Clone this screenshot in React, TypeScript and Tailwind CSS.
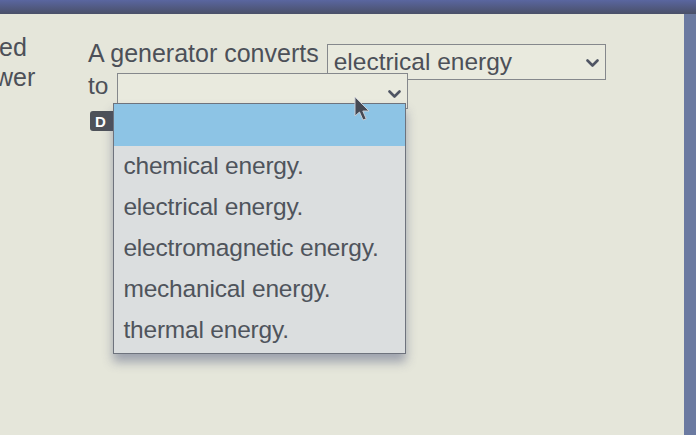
import React from 'react'

const options = [
  'chemical energy.',
  'electrical energy.',
  'electromagnetic energy.',
  'mechanical energy.',
  'thermal energy.'
]

const Chevron = () => (
  <svg width="13" height="9" viewBox="0 0 13 9" className="shrink-0">
    <path
      d="M1.5 1.5 L6.5 6.5 L11.5 1.5"
      fill="none"
      stroke="#4f5563"
      strokeWidth="2.6"
      strokeLinecap="round"
      strokeLinejoin="round"
    />
  </svg>
)

const Cursor = () => (
  <svg
    width="18"
    height="27"
    viewBox="0 0 18 27"
    className="absolute left-[236px] top-[-12px] z-20"
  >
    <path
      d="M1 1 L1 20 L5.5 16 L9 24 L12.2 22.8 L8.8 15 L15 15 Z"
      fill="#454954"
      stroke="#c9ccd3"
      strokeWidth="1"
      strokeLinejoin="round"
    />
  </svg>
)

const OptionList = () => (
  <div className="absolute left-[-5px] top-[-5px] z-10 w-[293px] border border-[#6e737d] bg-[#dbdedf] shadow-[0_8px_10px_rgba(70,80,120,0.45)]">
    <div className="h-[42px] bg-[#8dc4e5]" />
    <ul className="pb-[2px]">
      {options.map((opt) => (
        <li
          key={opt}
          className="flex h-[41px] items-center pl-[9px] text-[24.5px] leading-none tracking-[-0.2px] text-[#4f545c]"
        >
          {opt}
        </li>
      ))}
    </ul>
  </div>
)

export default function App() {
  return (
    <div className="flex h-[435px] w-[696px] flex-col overflow-hidden bg-[#e5e6da] font-['Liberation_Sans',Arial,sans-serif] text-[#4c5058]">
      <div className="h-[14px] bg-gradient-to-b from-[#5a66a0] to-[#4a5068]" />
      <div className="flex flex-1">
        <div className="flex flex-1 pt-[30px]">
          {/* instruction column, cut off by the window edge */}
          <div className="-mt-[12px] flex w-[88px] flex-col overflow-hidden text-[25px] leading-[30px]">
            <span className="-ml-[1px]">ed</span>
            <span className="-ml-[5px]">wer</span>
          </div>

          <div className="flex flex-col text-[24.5px] leading-none">
            <div className="flex h-[35px] items-start">
              <span className="mr-[8px] -mt-[3px] text-[25px]">A generator converts</span>
              <div className="flex h-[36px] w-[279px] items-center justify-between border border-[#85888c] bg-[#e9eade] pl-[6px] pr-[6px]">
                <span>electrical energy</span>
                <div className="pt-[3px]">
                  <Chevron />
                </div>
              </div>
            </div>

            <div className="-mt-[6px] flex h-[35px] items-start">
              <span className="mr-[9px] mt-[1px]">to</span>
              <div className="relative flex h-[36px] w-[291px] items-center justify-end border border-[#85888c] bg-[#e9eade] pr-[6px]">
                <div className="pt-[6px]">
                  <Chevron />
                </div>
                <div className="absolute left-0 top-full">
                  <Cursor />
                  <OptionList />
                </div>
              </div>
            </div>

            <div className="mt-[3px] flex pl-[2px]">
              <span className="flex h-[20px] w-[27px] items-center rounded-[3px] bg-[#4e5259] pl-[5px] text-[15px] font-bold text-white">
                D
              </span>
            </div>
          </div>
        </div>
        <div className="w-[12px] bg-[#6b7aa1]" />
      </div>
    </div>
  )
}
